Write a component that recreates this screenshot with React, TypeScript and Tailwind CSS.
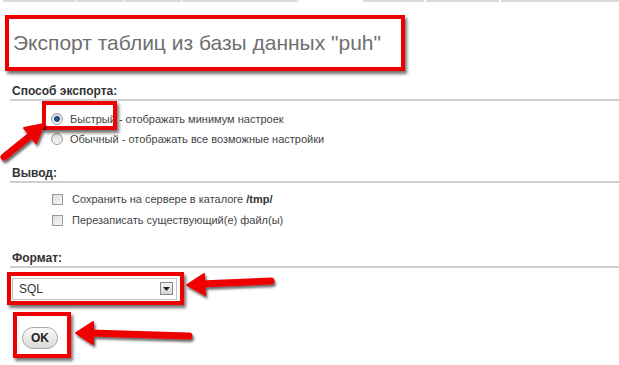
import React from "react";

const font = { fontFamily: '"Liberation Sans", Arial, sans-serif' };

function Radio({ checked }: { checked?: boolean }) {
  return (
    <span className="w-[12px] h-[12px] rounded-full border border-[#9a9a9a] bg-gradient-to-b from-[#d8d8d8] to-[#fafafa] flex items-center justify-center shrink-0">
      {checked && <span className="w-[6px] h-[6px] rounded-full bg-[#1f5f9a] border border-[#0d3d6b]" />}
    </span>
  );
}

function Checkbox() {
  return (
    <span className="w-[11px] h-[11px] border border-[#9a9a9a] bg-gradient-to-br from-[#dcdcdc] to-[#f7f7f7] shrink-0" />
  );
}

function Heading({ children }: { children: React.ReactNode }) {
  return (
    <div className="ml-[10px] border-b-2 border-[#cfcfcf] pl-[2px] pb-[1px] text-[12px] leading-[14px] font-bold text-[#333]">
      {children}
    </div>
  );
}

export default function App() {
  return (
    <div className="relative w-[619px] h-[365px] bg-white overflow-hidden text-[#444]" style={font}>
      {/* top tab strip */}
      <div className="flex h-[2px]">
        <div className="w-[3px]" />
        <div className="w-[73px] bg-[#dadada]" />
        <div className="w-[1px]" />
        <div className="w-[47px] bg-[#dadada]" />
        <div className="w-[1px]" />
        <div className="w-[56px] bg-[#dadada]" />
        <div className="w-[1px]" />
        <div className="w-[115px] bg-[#dadada]" />
        <div className="w-[1px]" />
        <div className="w-[1px] bg-[#dadada]" />
        <div className="w-[64px]" />
        <div className="w-[61px] bg-[#dadada]" />
        <div className="w-[2px]" />
        <div className="w-[73px] bg-[#dadada]" />
        <div className="w-[2px]" />
        <div className="flex-1 bg-[#dadada]" />
      </div>

      {/* title */}
      <div className="mt-[13px] ml-[5px] w-[400px] h-[56px] border-4 border-[#ee0000] shadow-[2px_3px_3px_rgba(0,0,0,0.55)] flex items-center pl-[4px]">
        <span className="text-[21px] leading-[26px] text-[#6f6f6f]">Экспорт таблиц из базы данных "puh"</span>
      </div>

      {/* export method */}
      <div className="mt-[13px]">
        <Heading>Способ экспорта:</Heading>
        <div className="mt-[12px] ml-[51px] flex flex-col gap-[8px] text-[11px] leading-[12px]">
          <div className="flex items-center gap-[7px]">
            <Radio checked />
            <span>Быстрый - отображать минимум настроек</span>
          </div>
          <div className="flex items-center gap-[7px]">
            <Radio />
            <span>Обычный - отображать все возможные настройки</span>
          </div>
        </div>
      </div>

      {/* output */}
      <div className="mt-[21px]">
        <Heading>Вывод:</Heading>
        <div className="mt-[11px] ml-[52px] flex flex-col gap-[10px] text-[11px] leading-[11px]">
          <div className="flex items-center gap-[9px]">
            <Checkbox />
            <span>
              Сохранить на сервере в каталоге <b className="text-[#333]">/tmp/</b>
            </span>
          </div>
          <div className="flex items-center gap-[9px]">
            <Checkbox />
            <span>Перезаписать существующий(е) файл(ы)</span>
          </div>
        </div>
      </div>

      {/* format */}
      <div className="mt-[25px]">
        <Heading>Формат:</Heading>
        <div className="mt-[4px] ml-[7px] w-[177px] h-[33px] border-4 border-[#ee0000] shadow-[2px_3px_3px_rgba(0,0,0,0.55)] flex items-center pl-[1px]">
          <div className="w-[165px] h-[22px] border border-[#c4c4c4] bg-white flex items-center justify-between pl-[6px] pr-[3px] text-[12px] text-[#333]">
            <span>SQL</span>
            <span className="w-[13px] h-[13px] border border-[#8a8a8a] bg-gradient-to-b from-[#f4f4f4] to-[#d6d6d6] flex items-center justify-center">
              <svg width="7" height="4" viewBox="0 0 7 4">
                <path d="M0 0h7L3.5 4z" fill="#222" />
              </svg>
            </span>
          </div>
        </div>
        <div className="mt-[7px] ml-[13px] w-[58px] h-[46px] border-4 border-[#ee0000] shadow-[2px_3px_3px_rgba(0,0,0,0.55)] flex items-end pb-[5px] pl-[5px]">
          <div className="w-[36px] h-[22px] rounded-full border border-[#a9a9a9] bg-gradient-to-b from-[#fbfbfb] to-[#d9d9d9] flex items-center justify-center text-[12px] font-bold text-[#222]">
            OK
          </div>
        </div>
      </div>

      {/* highlight box around the "Быстрый" radio */}
      <div className="absolute left-[42px] top-[101px] w-[75px] h-[29px] border-4 border-[#ee0000] shadow-[2px_3px_3px_rgba(0,0,0,0.55)] pointer-events-none" />

      {/* arrows overlay */}
      <svg className="absolute inset-0 pointer-events-none" width="619" height="365" viewBox="0 0 619 365">
        <defs>
          <filter id="sh" x="-20%" y="-20%" width="140%" height="160%">
            <feDropShadow dx="1.5" dy="2.5" stdDeviation="1.2" floodColor="#000" floodOpacity="0.6" />
          </filter>
        </defs>
        <g filter="url(#sh)" fill="#ee0000" stroke="#ee0000" strokeLinejoin="round" strokeLinecap="round">
          <line x1="4" y1="157" x2="30" y2="136" strokeWidth="7" />
          <polygon points="44,124 24,128 36,143" strokeWidth="2" />
          <line x1="200" y1="284" x2="271" y2="281" strokeWidth="7" />
          <polygon points="187,285 204,274 205,295" strokeWidth="2" />
          <line x1="90" y1="333" x2="189" y2="336" strokeWidth="7" />
          <polygon points="76,333 93,322 93,344" strokeWidth="2" />
        </g>
      </svg>
    </div>
  );
}
